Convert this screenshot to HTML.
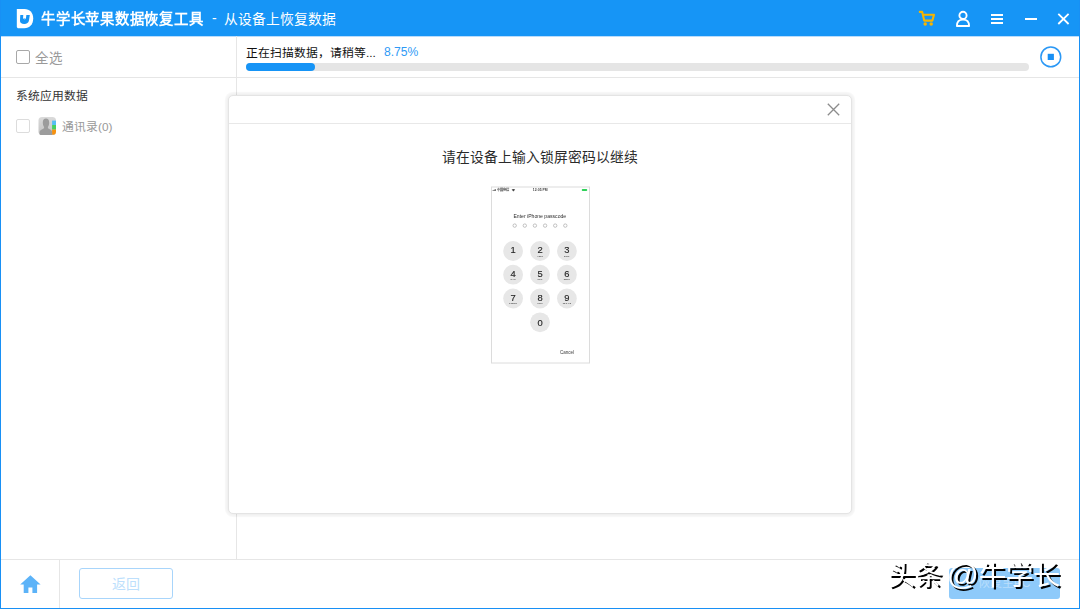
<!DOCTYPE html>
<html lang="zh-CN">
<head>
<meta charset="utf-8">
<title>牛学长苹果数据恢复工具</title>
<style>
*{box-sizing:border-box;margin:0;padding:0}
html,body{width:1080px;height:609px;overflow:hidden;background:#fff}
body{font-family:"Liberation Sans",sans-serif;font-size:12px;color:#333;position:relative}
.abs{position:absolute}
#win{position:absolute;left:0;top:0;width:1080px;height:609px;background:#fff;border:1px solid #1890f5;border-top:none;overflow:hidden}
#titlebar{position:absolute;left:-1px;top:0;width:1080px;height:36px;background:#1695f6}
#titlebar .t1{position:absolute;left:41px;top:0;height:36px;line-height:39px;color:#fff;font-weight:bold;font-size:14.6px;white-space:nowrap;transform:scaleX(0.984);transform-origin:0 50%}
#titlebar .dash{position:absolute;left:212px;top:0;line-height:37px;color:#fff;font-size:14px}
#titlebar .t2{position:absolute;left:224px;top:0;height:36px;line-height:39px;color:#fff;font-size:13.8px;white-space:nowrap}
.hline{position:absolute;height:1px;background:#e6e6e6}
.vline{position:absolute;width:1px;background:#e6e6e6}
.cb{position:absolute;width:14px;height:14px;border:1px solid #a8a8a8;border-radius:2px;background:#fff}
.grey{color:#999}
#modal{position:absolute;left:227px;top:95px;width:624px;height:419px;background:#fff;border:1px solid #e4e4e4;border-radius:5px;box-shadow:0 0 0 3px rgba(0,0,0,.022),0 0 4px rgba(0,0,0,.09)}
#modal .hd{position:absolute;left:0;top:0;width:100%;height:28px;border-bottom:1px solid #e8e8e8}
#modal .msg{position:absolute;left:0;top:52.8px;width:100%;text-align:center;font-size:13.8px;line-height:18px;color:#2a2a2a;white-space:nowrap}
#back{position:absolute;left:78px;top:568px;width:94px;height:31px;border:1px solid #a8d5fb;border-radius:3px;color:#bddffc;font-size:14px;line-height:31px;text-align:center;background:#fff}
#recover{position:absolute;left:947.5px;top:568px;width:111px;height:31px;border-radius:3px;background:#8ecafa;color:#b9defc;font-size:12px;line-height:31px;text-align:center}
#wm{position:absolute;left:887.1px;top:558px;font-size:27.3px;word-spacing:-2.5px;line-height:36px;color:#fff;font-weight:500;text-shadow:1.6px 1.6px 0.4px #000;will-change:transform;white-space:nowrap;letter-spacing:0}
</style>
</head>
<body>
<div id="win">
  <div id="titlebar">
    <svg class="abs" style="left:16px;top:8px" width="18" height="21" viewBox="0 0 18 21">
      <path d="M0.8 0.9 H8.5 C13.8 0.9 17.2 4.6 17.2 10.4 C17.2 16.3 13.6 20.2 8.3 20.2 H2.6 C1.5 20.2 0.8 19.5 0.8 18.4 Z" fill="#fff"/>
      <path d="M4.3 7.0 H13.8 L13.0 12.2 C12.6 14.7 10.9 15.9 8.3 15.9 C5.6 15.9 3.7 14.7 4.0 12.2 Z" fill="#1695f6"/>
      <path d="M7.3 6.8 H10.4 L10.0 9.9 L8.6 12.0 L8.8 10.3 L7.0 10.7 Z" fill="#fff"/>
    </svg>
    <div class="t1">牛学长苹果数据恢复工具</div>
    <div class="dash">-</div>
    <div class="t2">从设备上恢复数据</div>
    <!-- cart -->
    <svg class="abs" style="left:917px;top:9px" width="20" height="19" viewBox="0 0 20 19">
      <path d="M2.8 2.9 H5.2 L7.2 11.6 H15.4 L17.0 5.7 H6.0" fill="none" stroke="#f7b500" stroke-width="2.1" stroke-linejoin="round" stroke-linecap="round"/>
      <circle cx="8.2" cy="15.0" r="1.75" fill="#f7b500"/>
      <circle cx="14.2" cy="15.0" r="1.75" fill="#f7b500"/>
    </svg>
    <!-- user -->
    <svg class="abs" style="left:954px;top:9px" width="18" height="20" viewBox="0 0 18 20">
      <circle cx="9" cy="6.4" r="3.6" fill="none" stroke="#fff" stroke-width="1.9"/>
      <path d="M2.9 17.0 C2.9 12.6 5.4 10.6 9 10.6 C12.6 10.6 15.1 12.6 15.1 17.0 Z" fill="none" stroke="#fff" stroke-width="1.9" stroke-linejoin="round"/>
    </svg>
    <!-- menu -->
    <div class="abs" style="left:991px;top:14px;width:12px;height:2px;background:#fff"></div>
    <div class="abs" style="left:991px;top:18px;width:12px;height:2px;background:#fff"></div>
    <div class="abs" style="left:991px;top:22px;width:12px;height:2px;background:#fff"></div>
    <!-- min -->
    <div class="abs" style="left:1025px;top:18px;width:12px;height:2px;background:#fff"></div>
    <!-- close -->
    <svg class="abs" style="left:1056px;top:12px" width="14" height="14" viewBox="0 0 14 14">
      <path d="M2.3 1.8 L12.6 12 M12.6 1.8 L2.3 12" stroke="#fff" stroke-width="1.8" fill="none"/>
    </svg>
  </div>

  <div class="abs" style="left:0;top:36px;width:1078px;height:1px;background:#b9dcfc"></div>
  <!-- sidebar -->
  <div class="cb" style="left:15px;top:50px"></div>
  <div class="abs grey tx" style="left:33.5px;top:49.5px;font-size:13.5px;letter-spacing:1px;line-height:18px">全选</div>
  <div class="hline" style="left:0;top:77px;width:1078px"></div>
  <div class="vline" style="left:235px;top:36px;height:523px"></div>
  <div class="abs tx" style="left:14.5px;top:87.3px;font-size:11.8px;line-height:18px;color:#333">系统应用数据</div>
  <div class="cb" style="left:15px;top:119px;border-color:#dcdcdc"></div>
  <svg class="abs" style="left:37px;top:116px" width="20" height="20" viewBox="0 0 20 20">
    <defs>
      <linearGradient id="cg" x1="0" y1="0" x2="0" y2="1"><stop offset="0" stop-color="#dcdcdc"/><stop offset="1" stop-color="#c0c0c0"/></linearGradient>
      <clipPath id="cc"><rect x="0.5" y="0.9" width="17.5" height="18.1" rx="3.6"/></clipPath>
    </defs>
    <g clip-path="url(#cc)">
      <rect x="0" y="0" width="20" height="20" fill="url(#cg)"/>
      <rect x="14.1" y="4.6" width="4" height="4.4" fill="#55bdf3"/>
      <rect x="14.1" y="9.0" width="4" height="4.6" fill="#45cf60"/>
      <rect x="14.1" y="13.6" width="4" height="5" fill="#f8920e"/>
      <path d="M8.0 2.6 C10.0 2.6 11.2 4.2 11.2 6.6 C11.2 8.6 10.6 10.2 9.9 11.0 C9.8 12.2 10.4 12.7 11.6 13.2 C13.2 13.8 14.1 14.6 14.1 16.4 V19.2 H1.6 V16.6 C1.6 14.6 2.8 13.8 4.4 13.2 C5.6 12.7 6.2 12.2 6.1 11.0 C5.4 10.2 4.8 8.6 4.8 6.6 C4.8 4.2 6.0 2.6 8.0 2.6 Z" fill="#9c9c9c"/>
    </g>
  </svg>
  <div class="abs grey tx" style="left:61px;top:117.6px;font-size:11.8px;line-height:18px">通讯录(0)</div>

  <!-- progress -->
  <div class="abs tx" style="left:245px;top:43.6px;font-size:11.8px;line-height:18px;color:#111;white-space:nowrap">正在扫描数据，请稍等...</div>
  <div class="abs tx" style="left:383px;top:43px;font-size:12.1px;line-height:18px;color:#2f9af5;white-space:nowrap">8.75%</div>
  <div class="abs" style="left:245px;top:63px;width:783px;height:8px;border-radius:4px;background:#e5e5e5"></div>
  <div class="abs" style="left:245px;top:63px;width:69px;height:8px;border-radius:4px;background:#1694f6"></div>
  <!-- stop button -->
  <svg class="abs" style="left:1038px;top:45px" width="24" height="24" viewBox="0 0 24 24">
    <circle cx="11.8" cy="11.9" r="9.9" fill="#fff" stroke="#2b98f5" stroke-width="1.5"/>
    <rect x="8.7" y="8.8" width="6.2" height="6.2" fill="#1890f5"/>
  </svg>

  <!-- modal -->
  <div id="modal">
    <div class="hd"></div>
    <svg class="abs" style="left:597.3px;top:6px" width="15" height="15" viewBox="0 0 15 15">
      <path d="M1.8 1.8 L13.2 13.2 M13.2 1.8 L1.8 13.2" stroke="#8c8c8c" stroke-width="1.3" fill="none"/>
    </svg>
    <div class="msg">请在设备上输入锁屏密码以继续</div>
  </div>

  <!-- phone -->
  <svg class="abs" style="left:488px;top:185px" width="102" height="180" viewBox="489 185 102 180" font-family="Liberation Sans, sans-serif">
    <rect x="491.5" y="187" width="98" height="176" fill="#fff" stroke="#dcdcdc" stroke-width="1"/>
    <g id="phone-inner" style="filter:blur(0.25px)">
    <g fill="#444">
    <rect x="492.6" y="190.3" width="0.7" height="0.7"/><rect x="493.5" y="189.9" width="0.7" height="1.1"/><rect x="494.4" y="189.5" width="0.7" height="1.5"/><rect x="495.3" y="189.1" width="0.7" height="1.9"/>
    </g>
    <text x="496.6" y="191.1" font-size="3.4" fill="#444" font-weight="bold">中国电信</text>
    <path d="M511.6 189.6 Q513.4 188.2 515.2 189.6 L513.4 191.4 Z" fill="#444"/>
    <text x="540.2" y="191.1" font-size="3.4" fill="#444" text-anchor="middle" font-weight="bold">12:05 PM</text>
    <rect x="581.8" y="188.9" width="5.4" height="2.2" rx="0.8" fill="#2fd158"/>
    <text x="539.8" y="218" font-size="5.1" fill="#2a2a2a" text-anchor="middle">Enter iPhone passcode</text>
    <circle cx="514.7" cy="225.6" r="1.7" fill="none" stroke="#8a8a8a" stroke-width="0.5"/>
    <circle cx="524.8" cy="225.6" r="1.7" fill="none" stroke="#8a8a8a" stroke-width="0.5"/>
    <circle cx="534.9" cy="225.6" r="1.7" fill="none" stroke="#8a8a8a" stroke-width="0.5"/>
    <circle cx="545.1" cy="225.6" r="1.7" fill="none" stroke="#8a8a8a" stroke-width="0.5"/>
    <circle cx="555.2" cy="225.6" r="1.7" fill="none" stroke="#8a8a8a" stroke-width="0.5"/>
    <circle cx="565.3" cy="225.6" r="1.7" fill="none" stroke="#8a8a8a" stroke-width="0.5"/>
    <circle cx="513.1" cy="251.0" r="9.9" fill="#e7e7e7"/>
    <text x="513.1" y="253.3" font-size="9.4" fill="#262626" stroke="#262626" stroke-width="0.15" text-anchor="middle">1</text>
    <circle cx="540.0" cy="251.0" r="9.9" fill="#e7e7e7"/>
    <text x="540.0" y="253.3" font-size="9.4" fill="#262626" stroke="#262626" stroke-width="0.15" text-anchor="middle">2</text>
    <text x="540.1" y="256.6" font-size="2.5" fill="#444" text-anchor="middle" font-weight="bold" letter-spacing="0.3">ABC</text>
    <circle cx="566.9" cy="251.0" r="9.9" fill="#e7e7e7"/>
    <text x="566.9" y="253.3" font-size="9.4" fill="#262626" stroke="#262626" stroke-width="0.15" text-anchor="middle">3</text>
    <text x="567.0" y="256.6" font-size="2.5" fill="#444" text-anchor="middle" font-weight="bold" letter-spacing="0.3">DEF</text>
    <circle cx="513.1" cy="274.7" r="9.9" fill="#e7e7e7"/>
    <text x="513.1" y="277.0" font-size="9.4" fill="#262626" stroke="#262626" stroke-width="0.15" text-anchor="middle">4</text>
    <text x="513.2" y="280.3" font-size="2.5" fill="#444" text-anchor="middle" font-weight="bold" letter-spacing="0.3">GHI</text>
    <circle cx="540.0" cy="274.7" r="9.9" fill="#e7e7e7"/>
    <text x="540.0" y="277.0" font-size="9.4" fill="#262626" stroke="#262626" stroke-width="0.15" text-anchor="middle">5</text>
    <text x="540.1" y="280.3" font-size="2.5" fill="#444" text-anchor="middle" font-weight="bold" letter-spacing="0.3">JKL</text>
    <circle cx="566.9" cy="274.7" r="9.9" fill="#e7e7e7"/>
    <text x="566.9" y="277.0" font-size="9.4" fill="#262626" stroke="#262626" stroke-width="0.15" text-anchor="middle">6</text>
    <text x="567.0" y="280.3" font-size="2.5" fill="#444" text-anchor="middle" font-weight="bold" letter-spacing="0.3">MNO</text>
    <circle cx="513.1" cy="298.5" r="9.9" fill="#e7e7e7"/>
    <text x="513.1" y="300.8" font-size="9.4" fill="#262626" stroke="#262626" stroke-width="0.15" text-anchor="middle">7</text>
    <text x="513.2" y="304.1" font-size="2.5" fill="#444" text-anchor="middle" font-weight="bold" letter-spacing="0.3">PQRS</text>
    <circle cx="540.0" cy="298.5" r="9.9" fill="#e7e7e7"/>
    <text x="540.0" y="300.8" font-size="9.4" fill="#262626" stroke="#262626" stroke-width="0.15" text-anchor="middle">8</text>
    <text x="540.1" y="304.1" font-size="2.5" fill="#444" text-anchor="middle" font-weight="bold" letter-spacing="0.3">TUV</text>
    <circle cx="566.9" cy="298.5" r="9.9" fill="#e7e7e7"/>
    <text x="566.9" y="300.8" font-size="9.4" fill="#262626" stroke="#262626" stroke-width="0.15" text-anchor="middle">9</text>
    <text x="567.0" y="304.1" font-size="2.5" fill="#444" text-anchor="middle" font-weight="bold" letter-spacing="0.3">WXYZ</text>
    <circle cx="540.0" cy="322.3" r="9.9" fill="#e7e7e7"/>
    <text x="540.0" y="325.6" font-size="9.4" fill="#262626" stroke="#262626" stroke-width="0.15" text-anchor="middle">0</text>
    <text x="567" y="354" font-size="4.5" fill="#3a3a3a" text-anchor="middle">Cancel</text>
    </g>
  </svg>

  <!-- footer -->
  <div class="hline" style="left:0;top:559px;width:1078px"></div>
  <div class="vline" style="left:58px;top:560px;height:50px"></div>
  <svg class="abs" style="left:18px;top:574px" width="22" height="20" viewBox="0 0 22 20">
    <path d="M11.4 1.3 L21.6 10.6 H18.1 V19 H13.4 V13.6 H9.4 V19 H4.7 V10.6 H1.2 Z" fill="#5cb3f8"/>
  </svg>
  <div id="back">返回</div>
  <div id="recover">恢复至PC</div>
  <div id="wm">头条 <span style="display:inline-block;transform:scale(1.16,1.05);transform-origin:50% 60%;margin:0 2.2px 0 2.2px">@</span>牛学长</div>
</div>
</body>
</html>
